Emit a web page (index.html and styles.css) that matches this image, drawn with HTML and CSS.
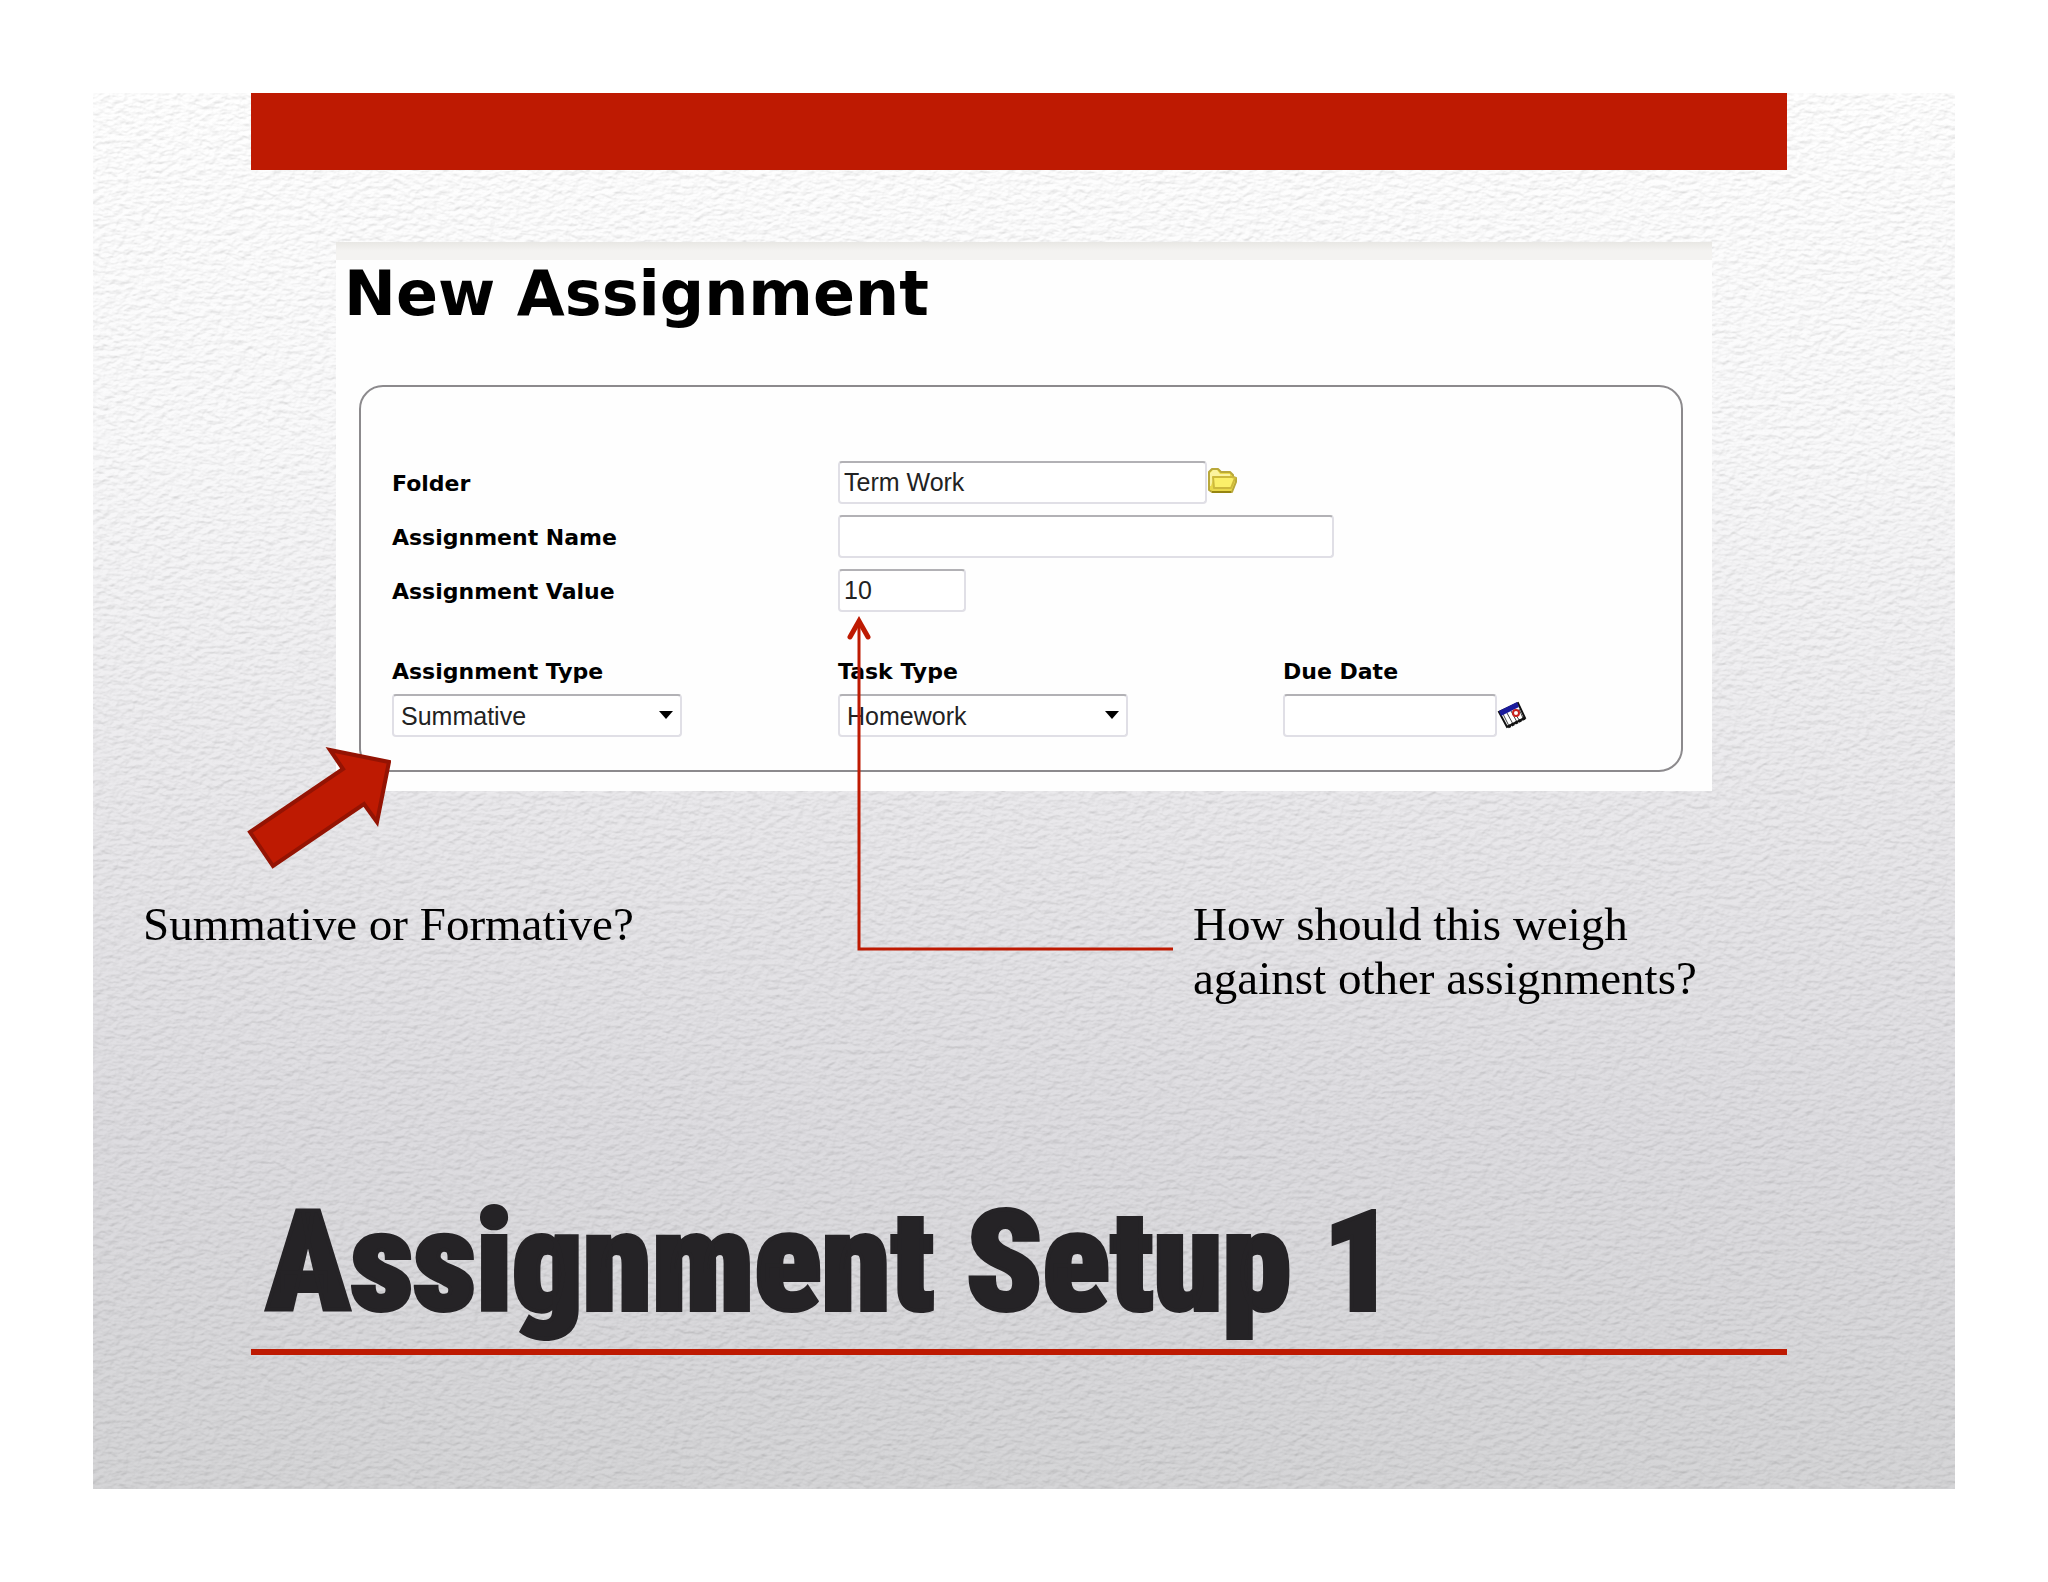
FILE: index.html
```html
<!DOCTYPE html>
<html lang="en">
<head>
  <meta charset="utf-8">
  <title>Assignment Setup 1</title>
  <link rel="stylesheet" href="styles.css">
</head>
<body>
<div class="slide">

  <!-- paper grain -->
  <svg class="paper" aria-hidden="true">
    <filter id="grain" x="0" y="0" width="100%" height="100%" color-interpolation-filters="sRGB">
      <feTurbulence type="fractalNoise" baseFrequency="0.12 0.2" numOctaves="3" seed="4" result="noise"/>
      <feDiffuseLighting in="noise" lighting-color="#fff" surfaceScale="1.5" diffuseConstant="1.05">
        <feDistantLight azimuth="250" elevation="62"/>
      </feDiffuseLighting>
    </filter>
    <rect width="100%" height="100%" filter="url(#grain)"/>
  </svg>

  <div class="top_bar"></div>

  <div class="panel">
    <h2>New Assignment</h2>

    <form class="box">
      <div class="row">
        <label for="folder">Folder</label>
        <div class="field">
          <input id="folder" class="w_folder" type="text" value="Term Work">
          <button type="button" class="icon" aria-label="Choose folder">
            <svg width="30" height="32" viewBox="0 0 30 32">
              <path d="M2 24V6l3-3h6l3 3h9l3 3v2l3 1v4l-4 10H5z" fill="#e9d84a" stroke="#b9a83a" stroke-width="2" stroke-linejoin="round"/>
              <path d="M3 7l3-3h4l3 4h10v3H7L4 20H3z" fill="#fbf3a0"/>
              <path d="M6 11h19l3 1-4 10H7z" fill="#fbf06a" stroke="#cdb93c" stroke-width="2" stroke-linejoin="round"/>
              <path d="M5 26h19" stroke="#968510" stroke-width="2"/>
            </svg>
          </button>
        </div>
      </div>
      <div class="row">
        <label for="name">Assignment Name</label>
        <div class="field"><input id="name" class="w_name" type="text"></div>
      </div>
      <div class="row">
        <label for="value">Assignment Value</label>
        <div class="field"><input id="value" class="w_value" type="text" value="10"></div>
      </div>

      <div class="row types">
        <div>
          <label for="type">Assignment Type</label>
          <div class="select">
            <select id="type"><option>Summative</option><option>Formative</option></select>
          </div>
        </div>
        <div>
          <label for="task">Task Type</label>
          <div class="select">
            <select id="task"><option>Homework</option></select>
          </div>
        </div>
        <div>
          <label for="due">Due Date</label>
          <div class="field">
            <input id="due" class="w_due" type="text">
            <button type="button" class="icon" aria-label="Pick a date">
              <svg width="30" height="28" viewBox="0 0 30 28">
                <path d="M2 11L21 2l7 15-18 9z" fill="#fff" stroke="#111" stroke-width="2"/>
                <path d="M6 13l6 12M10 12l6 11M14 10l6 11M18 13l5 7M22 8l4 9" stroke="#444" stroke-width="1" fill="none"/>
                <path d="M2 10L20 1l2 5L4 15z" fill="#1a1a9c"/>
                <path d="M11 26l17-9" stroke="#111" stroke-width="3" stroke-dasharray="3 1"/>
                <circle cx="19" cy="12" r="3" fill="#fff" stroke="#c8201c" stroke-width="2"/>
              </svg>
            </button>
          </div>
        </div>
      </div>
    </form>

    <svg class="block_arrow" width="146" height="124" viewBox="0 0 146 124">
      <path d="M85 4L144 16 132 76 119 58 28 120 5 86 98 23z" fill="#be1a02" stroke="#941303" stroke-width="4"/>
    </svg>
    <svg class="connector" width="330" height="338" viewBox="0 0 330 338" fill="none" stroke="#be1a02">
      <path d="M13 6V334H327" stroke-width="3"/>
      <path d="M4 22L13 6l9 16" stroke-width="5" stroke-linecap="round"/>
    </svg>
  </div>

  <div class="notes">
    <p>Summative or Formative?</p>
    <p>How should this weigh<br>against other assignments?</p>
  </div>

  <h1>Assignment Setup 1</h1>

</div>
</body>
</html>
```
FILE: styles.css
```css
* {
  box-sizing: border-box;
}
body {
  margin: 0;
  padding: 93px;
  background: #fff;
  color: #000;
}
h1, h2, p {
  margin: 0;
}

.slide {
  position: relative;
  min-height: calc(100vh - 186px);
  background: linear-gradient(#fff, #fafafb 25%, #e9e8eb 52%, #dddce0 75%, #d5d5d7);
}
.paper {
  position: absolute;
  top: 0;
  left: 0;
  width: 100%;
  height: 100%;
  mix-blend-mode: multiply;
  opacity: 0.25;
}
.top_bar {
  position: relative;
  height: 77px;
  margin: 0 168px 0 158px;
  background: #be1a02;
}

/* form */
.panel {
  position: relative;
  margin: 72px 243px 0;
  padding: 0 29px 19px 23px;
  background: #fefefe;
}
.panel:before {
  content: "";
  display: block;
  height: 18px;
  margin: 0 -29px 0 -23px;
  background: linear-gradient(#e8e7e4, #f4f3f1 50%);
}
h2 {
  margin-left: -15px;
  font: bold 62px/68px Verdana, "DejaVu Sans", sans-serif;
}
.box {
  margin-top: 57px;
  padding: 74px 30px 34px 31px;
  border: 2px solid #8c8a8d;
  border-radius: 24px;
}
.row {
  display: grid;
  grid-template-columns: 446px 1fr;
  align-items: end;
  margin-bottom: 12px;
}
.types {
  grid-template-columns: 446px 445px 1fr;
  margin: 48px 0 0;
}
label {
  padding-bottom: 6px;
  font: bold 22px/26px Verdana, "DejaVu Sans", sans-serif;
}
.types label {
  display: block;
  padding-bottom: 9px;
}
.field {
  display: flex;
  align-items: center;
}
input, select {
  height: 43px;
  margin-bottom: -1px;
  padding: 0 4px;
  border: 2px solid #e0dfe6;
  border-top-color: #b2b1b5;
  border-radius: 4px;
  background: #fff;
  color: #222;
  font: 25px "Liberation Sans", Arial, sans-serif;
}
.w_folder { width: 369px; }
.w_name { width: 496px; }
.w_value { width: 128px; }
.w_due { width: 214px; }

.select {
  position: relative;
  width: 290px;
}
.select select {
  width: 100%;
  padding-left: 7px;
  appearance: none;
}
.select:after {
  content: "";
  position: absolute;
  top: 17px;
  right: 9px;
  border: 7px solid transparent;
  border-top: 8px solid #000;
  border-bottom: 0;
  pointer-events: none;
}
.icon {
  padding: 0;
  border: 0;
  background: none;
}
.icon svg {
  display: block;
}

/* arrows drawn over the form */
.block_arrow {
  position: absolute;
  left: -91px;
  top: 504px;
}
.connector {
  position: absolute;
  left: 510px;
  top: 373px;
}

.notes {
  position: relative;
  display: grid;
  grid-template-columns: 1050px 1fr;
  margin: 106px 0 0 50px;
  font: 47px/54px "Liberation Serif", "Times New Roman", serif;
}
h1 {
  position: relative;
  margin: 178px 168px 0 158px;
  padding: 0 0 6px 15px;
  border-bottom: 6px solid #be1a02;
  color: #252326;
  font: 900 139px/160px Impact, "Roboto Condensed", sans-serif;
  -webkit-text-stroke: 4px #252326;
}
```
